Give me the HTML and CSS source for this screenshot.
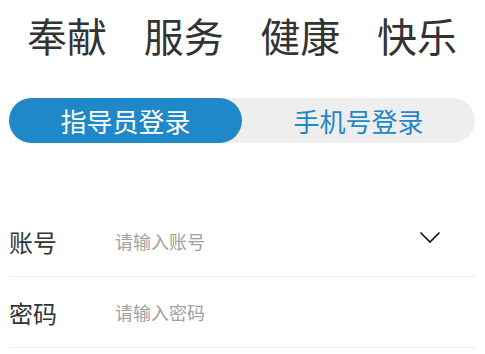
FILE: index.html
```html
<!DOCTYPE html>
<html lang="zh">
<head>
  <meta charset="UTF-8">
  <title>登录</title>
  <link rel="stylesheet" href="styles.css">
</head>
<body>

  <div class="slogan">
    <span>奉献</span>
    <span>服务</span>
    <span>健康</span>
    <span>快乐</span>
  </div>

  <div class="login-tabs">
    <div class="tab-item active">指导员登录</div>
    <div class="tab-item">手机号登录</div>
  </div>

  <div class="login-form">
    <div class="form-row">
      <span class="form-label">账号</span>
      <input class="form-input" type="text" placeholder="请输入账号">
      <svg class="arrow" width="22" height="13" viewBox="0 0 22 13">
        <path d="M1.5 1.5 L11 11 L20.5 1.5" fill="none" stroke="#111" stroke-width="1.6"/>
      </svg>
    </div>
    <div class="form-row">
      <span class="form-label">密码</span>
      <input class="form-input" type="password" placeholder="请输入密码">
    </div>
  </div>

</body>
</html>
```

FILE: styles.css
```css
body {
  margin: 0;
  font-family: "Noto Sans CJK SC", "Noto Sans", sans-serif;
  background: #fff;
}

.slogan {
  display: flex;
  justify-content: space-between;
  padding: 15px 28px 0 27px;
  font-size: 40px;
  line-height: 40px;
  color: #333;
}

.login-tabs {
  display: flex;
  margin: 43px 10px 0 9px;
  height: 45px;
  background-color: #eeeeee;
  border-radius: 23px;
}

.tab-item {
  flex: 1;
  display: flex;
  align-items: center;
  justify-content: center;
  font-size: 26px;
  color: #1e88c8;
  border-radius: 23px;
}

.tab-item.active {
  background-color: #1e88c8;
  color: white;
}

.login-form {
  margin: 63px 9px 0 9px;
}

.form-row {
  display: flex;
  align-items: center;
  height: 70px;
  border-bottom: 1px solid #eeeeee;
}

.form-label {
  width: 106px;
  font-size: 24px;
  color: #333;
}

.form-input {
  flex: 1;
  border: none;
  outline: none;
  padding: 0;
  font-family: inherit;
  font-size: 18px;
  color: #333;
  background: transparent;
}

.form-input::placeholder {
  color: #a0a0a0;
}

.arrow {
  margin: 0 35px 8px 0;
}
```
